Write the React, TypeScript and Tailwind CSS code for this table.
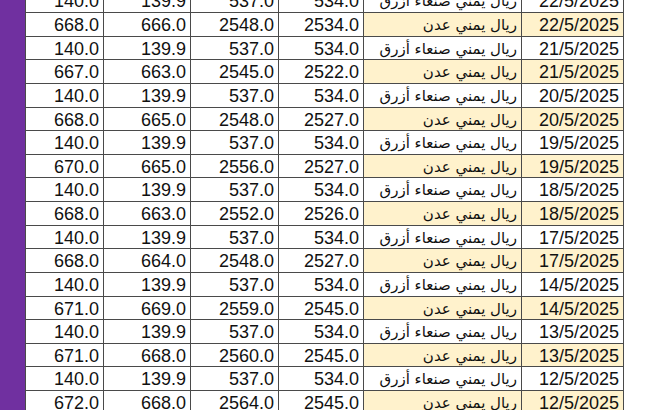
const SANAA = ['140.0', '139.9', '537.0', '534.0']

const days: { date: string; aden: string[] }[] = [
  { date: '22/5/2025', aden: ['668.0', '666.0', '2548.0', '2534.0'] },
  { date: '21/5/2025', aden: ['667.0', '663.0', '2545.0', '2522.0'] },
  { date: '20/5/2025', aden: ['668.0', '665.0', '2548.0', '2527.0'] },
  { date: '19/5/2025', aden: ['670.0', '665.0', '2556.0', '2527.0'] },
  { date: '18/5/2025', aden: ['668.0', '663.0', '2552.0', '2526.0'] },
  { date: '17/5/2025', aden: ['668.0', '664.0', '2548.0', '2527.0'] },
  { date: '14/5/2025', aden: ['671.0', '669.0', '2559.0', '2545.0'] },
  { date: '13/5/2025', aden: ['671.0', '668.0', '2560.0', '2545.0'] },
  { date: '12/5/2025', aden: ['672.0', '668.0', '2564.0', '2545.0'] },
]

const rows = days.flatMap(d => [
  { date: d.date, name: 'ريال يمني صنعاء أزرق', values: SANAA, aden: false },
  { date: d.date, name: 'ريال يمني عدن', values: d.aden, aden: true },
])

const cell =
  'h-[23.625px] border-r-[1.5px] border-b-[1.5px] border-[#4a4a4a] px-[4px] pt-[2px] text-right leading-[21px] overflow-hidden whitespace-nowrap'

export default function App() {
  return (
    <div className="h-[410px] w-[654px] overflow-hidden bg-[#7030a0] pl-[25px]">
      <div
        className="mt-[-10.6px] grid grid-cols-[79px_87px_88px_85px_158px_102px] bg-white text-[18px] text-[#111]"
        style={{ fontFamily: '"Liberation Sans", Arial, sans-serif' }}
      >
        {rows.map((r, i) => (
          <div key={i} className="contents">
            {r.values.map((v, j) => (
              <div key={j} className={`${cell} ${j === 0 ? 'border-l-[1.5px]' : ''} bg-white`}>
                {v}
              </div>
            ))}
            <div
              dir="rtl"
              className={`${cell} text-right text-[15px] ${r.aden ? 'bg-[#fff2cc]' : 'bg-white'}`}
              style={{ fontFamily: '"DejaVu Sans", sans-serif' }}
            >
              {r.name}
            </div>
            <div className={`${cell} ${r.aden ? 'bg-[#fff2cc]' : 'bg-white'}`}>{r.date}</div>
          </div>
        ))}
      </div>
    </div>
  )
}
